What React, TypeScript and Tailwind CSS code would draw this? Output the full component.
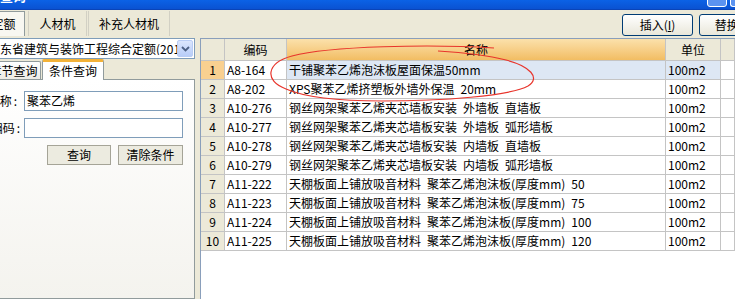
import { FC } from "react";

type Row = { no: number; code: string; name: string };

// SimSun style half-width space
const S = "\u2002";

const rows: Row[] = [
  { no: 1, code: "A8-164", name: "干铺聚苯乙烯泡沫板屋面保温50mm" },
  { no: 2, code: "A8-202", name: `XPS聚苯乙烯挤塑板外墙外保温${S}20mm` },
  { no: 3, code: "A10-276", name: `钢丝网架聚苯乙烯夹芯墙板安装${S}外墙板${S}直墙板` },
  { no: 4, code: "A10-277", name: `钢丝网架聚苯乙烯夹芯墙板安装${S}外墙板${S}弧形墙板` },
  { no: 5, code: "A10-278", name: `钢丝网架聚苯乙烯夹芯墙板安装${S}内墙板${S}直墙板` },
  { no: 6, code: "A10-279", name: `钢丝网架聚苯乙烯夹芯墙板安装${S}内墙板${S}弧形墙板` },
  { no: 7, code: "A11-222", name: `天棚板面上铺放吸音材料${S}聚苯乙烯泡沫板(厚度mm)${S}50` },
  { no: 8, code: "A11-223", name: `天棚板面上铺放吸音材料${S}聚苯乙烯泡沫板(厚度mm)${S}75` },
  { no: 9, code: "A11-224", name: `天棚板面上铺放吸音材料${S}聚苯乙烯泡沫板(厚度mm)${S}100` },
  { no: 10, code: "A11-225", name: `天棚板面上铺放吸音材料${S}聚苯乙烯泡沫板(厚度mm)${S}120` },
];

const cols = "grid grid-cols-[24px_62px_379px_55px_1fr]";
const cell = "border-r border-b border-[#c4c4c4] flex items-center";

const TitleBar: FC = () => (
  <div className="h-[10px] flex overflow-hidden bg-linear-to-b from-[#0b62e6] to-[#0a52d2] border-b border-[#0a44b8]">
    <span className="-mt-[11px] -ml-[26px] text-[13px] font-bold leading-none text-white whitespace-nowrap">定额查询</span>
    <div className="ml-auto flex gap-[3px]">
      <div className="w-[20px] h-[8px] -mt-px rounded-b-[3px] border border-white bg-[#5b93f0]" />
      <div className="w-[5px] h-[8px] -mt-px rounded-bl-[3px] border-l border-b border-white bg-[#5b93f0]" />
    </div>
  </div>
);

const TopStrip: FC = () => (
  <div className="h-[27px] flex items-start -ml-[20px] shrink-0">
    <div className="mt-px h-[25px] w-[45px] shrink-0 flex items-center justify-center border border-b-0 border-[#919b9c] bg-[#f8f7f1] pl-[2px]">
      定额
    </div>
    <div className="mt-px ml-[3px] h-[25px] w-[59px] shrink-0 flex items-center justify-center border-x border-[#d2d0c4]">
      人材机
    </div>
    <div className="mt-px ml-px h-[25px] w-[82px] shrink-0 flex items-center justify-center border-x border-[#d2d0c4]">
      补充人材机
    </div>
    <div className="ml-[452px] mt-[4px] flex gap-[6px] shrink-0">
      <button className="h-[22px] w-[71px] rounded-[3px] border border-[#003c74] bg-linear-to-b from-white to-[#e9e7da] flex items-center justify-center">
        插入(<span className="underline">I</span>)
      </button>
      <button className="h-[22px] w-[71px] rounded-[3px] border border-[#003c74] bg-linear-to-b from-white to-[#e9e7da] flex items-center justify-center">
        替换(<span className="underline">R</span>)
      </button>
    </div>
  </div>
);

const LeftPanel: FC = () => (
  <div className="w-[195px] h-full overflow-hidden shrink-0">
    <div className="-ml-[16px] w-[211px] h-full flex flex-col">
      <div className="mt-px h-[21px] border border-[#7f9db9] bg-white flex items-center">
        <div className="flex-1 pl-[3px] overflow-hidden whitespace-nowrap">广东省建筑与装饰工程综合定额(201</div>
        <div className="w-[16px] h-[17px] mr-px rounded-[2px] border border-[#b9cdf5] bg-linear-to-b from-[#dbe6fd] to-[#b8cdf8] flex items-center justify-center">
          <svg width="9" height="6" viewBox="0 0 9 6">
            <path d="M1 1 L4.5 4.5 L8 1" fill="none" stroke="#4d6185" strokeWidth="1.8" />
          </svg>
        </div>
      </div>
      <div className="h-[20px] flex items-end">
        <div className="ml-[2px] w-[55px] h-[18px] border border-b-0 border-[#919b9c] rounded-t-[2px] bg-linear-to-b from-white to-[#ecebe5] flex items-center justify-center">
          章节查询
        </div>
        <div className="ml-px w-[62px] h-[21px] -mb-px relative z-10 border-x border-[#919b9c] border-t-[3px] border-t-[#f3b238] rounded-t-[2px] bg-white flex items-center justify-center">
          条件查询
        </div>
      </div>
      <div className="flex-1 border border-[#919b9c] bg-linear-to-b from-white to-[#f4f3ee] pt-[11px]">
        <div className="flex items-center">
          <div className="w-[39px] pr-[7px] flex justify-end whitespace-nowrap">
            名称<span className="ml-[2px]">:</span>
          </div>
          <div className="w-[159px] h-[20px] border border-[#7f9db9] bg-white pl-[2px] flex items-center">聚苯乙烯</div>
        </div>
        <div className="mt-[7px] flex items-center">
          <div className="w-[39px] pr-[4px] flex justify-end whitespace-nowrap">
            编码<span className="ml-[2px]">:</span>
          </div>
          <div className="w-[159px] h-[20px] border border-[#7f9db9] bg-white" />
        </div>
        <div className="mt-[7px] ml-[62px] flex gap-[7px]">
          <button className="w-[64px] h-[20px] border border-[#a5a497] bg-[#ecebe0] flex items-center justify-center">查询</button>
          <button className="w-[65px] h-[20px] border border-[#a5a497] bg-[#ecebe0] flex items-center justify-center">清除条件</button>
        </div>
      </div>
    </div>
  </div>
);

const Grid: FC = () => (
  <div className="ml-[5px] mt-px flex-1 h-full bg-white border-l border-t border-[#8a9fbb] overflow-hidden">
    <div className={`${cols} h-[22px]`}>
      <div className={`${cell} bg-[#ece9d8]`} />
      <div className={`${cell} justify-center bg-[#ece9d8]`}>编码</div>
      <div className={`${cell} justify-center bg-linear-to-b from-[#fbe1ab] to-[#f2bd62]`}>名称</div>
      <div className={`${cell} justify-center bg-[#ece9d8]`}>单位</div>
      <div className={`${cell} bg-[#ece9d8]`} />
    </div>
    {rows.map((r) => {
      const sel = r.no === 1;
      return (
        <div key={r.no} className={`${cols} h-[19px]`}>
          <div className={`${cell} justify-center ${sel ? "bg-[#f9d090]" : "bg-[#ece9d8]"}`}>{r.no}</div>
          <div className={`${cell} pl-[2px]`}>{r.code}</div>
          <div className={`${cell} pl-[2px] whitespace-nowrap ${sel ? "bg-[#dde7f4]" : ""}`}>{r.name}</div>
          <div className={`${cell} pl-[2px] ${sel ? "bg-[#dde7f4]" : ""}`}>100m2</div>
          <div className={cell} />
        </div>
      );
    })}
  </div>
);

const App: FC = () => {
  return (
    <div className="relative w-[735px] h-[299px] overflow-hidden bg-[#ece9d8] text-black text-[12px] leading-none font-['Noto_Sans_CJK_SC',sans-serif]">
      <TitleBar />
      <TopStrip />
      <div className="h-[262px] flex">
        <LeftPanel />
        <Grid />
      </div>
      {/* 手绘的红色圈 */}
      <svg className="absolute left-0 top-0 pointer-events-none" width="735" height="299" viewBox="0 0 735 299">
        <path
          d="M494 48 C430 44 330 46 292 56 C266 63 264 81 286 89 C302 96 332 101 382 101 C442 101 510 96 528 86 C541 78 530 66 506 60 C490 56 470 53 438 51"
          fill="none"
          stroke="#e8352c"
          strokeWidth="1.2"
        />
      </svg>
    </div>
  );
};

export default App;
